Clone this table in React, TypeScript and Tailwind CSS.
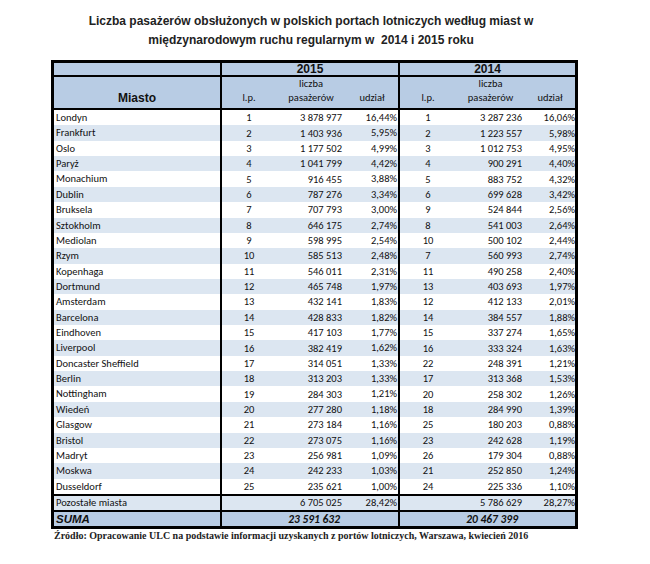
import React from 'react'

type Row = [string, string, string, string, string, string, string]

const ROWS: Row[] = [
  ['Londyn', '1', '3 878 977', '16,44%', '1', '3 287 236', '16,06%'],
  ['Frankfurt', '2', '1 403 936', '5,95%', '2', '1 223 557', '5,98%'],
  ['Oslo', '3', '1 177 502', '4,99%', '3', '1 012 753', '4,95%'],
  ['Paryż', '4', '1 041 799', '4,42%', '4', '900 291', '4,40%'],
  ['Monachium', '5', '916 455', '3,88%', '5', '883 752', '4,32%'],
  ['Dublin', '6', '787 276', '3,34%', '6', '699 628', '3,42%'],
  ['Bruksela', '7', '707 793', '3,00%', '9', '524 844', '2,56%'],
  ['Sztokholm', '8', '646 175', '2,74%', '8', '541 003', '2,64%'],
  ['Mediolan', '9', '598 995', '2,54%', '10', '500 102', '2,44%'],
  ['Rzym', '10', '585 513', '2,48%', '7', '560 993', '2,74%'],
  ['Kopenhaga', '11', '546 011', '2,31%', '11', '490 258', '2,40%'],
  ['Dortmund', '12', '465 748', '1,97%', '13', '403 693', '1,97%'],
  ['Amsterdam', '13', '432 141', '1,83%', '12', '412 133', '2,01%'],
  ['Barcelona', '14', '428 833', '1,82%', '14', '384 557', '1,88%'],
  ['Eindhoven', '15', '417 103', '1,77%', '15', '337 274', '1,65%'],
  ['Liverpool', '16', '382 419', '1,62%', '16', '333 324', '1,63%'],
  ['Doncaster Sheffield', '17', '314 051', '1,33%', '22', '248 391', '1,21%'],
  ['Berlin', '18', '313 203', '1,33%', '17', '313 368', '1,53%'],
  ['Nottingham', '19', '284 303', '1,21%', '20', '258 302', '1,26%'],
  ['Wiedeń', '20', '277 280', '1,18%', '18', '284 990', '1,39%'],
  ['Glasgow', '21', '273 184', '1,16%', '25', '180 203', '0,88%'],
  ['Bristol', '22', '273 075', '1,16%', '23', '242 628', '1,19%'],
  ['Madryt', '23', '256 981', '1,09%', '26', '179 304', '0,88%'],
  ['Moskwa', '24', '242 233', '1,03%', '21', '252 850', '1,24%'],
  ['Dusseldorf', '25', '235 621', '1,00%', '24', '225 336', '1,10%'],
]

const COLS = 'grid grid-cols-[168px_54px_70px_54px_56px_69px_50px]'
const BODY = "font-['Carlito','Calibri','Lato',sans-serif] text-[10.5px] text-[#111]"

export default function App() {
  return (
    <div className="w-[650px] h-[564px] bg-white text-black">
      {/* Title */}
      <div className="ml-[51px] w-[520px] pt-[12px] text-center font-['Liberation_Sans',Arial,sans-serif] font-bold text-[12px] leading-[19px] text-[#222]">
        <div>Liczba pasażerów obsłużonych w polskich portach lotniczych według miast w</div>
        <div className="whitespace-pre">międzynarodowym ruchu regularnym w  2014 i 2015 roku</div>
      </div>

      {/* Table */}
      <div className={`ml-[51px] mt-[10px] w-[527px] border-[3px] border-black ${BODY}`}>
        {/* year row */}
        <div className={`${COLS} h-[14px] bg-[#b8cce4] border-b-2 border-black font-['Liberation_Sans',Arial,sans-serif] font-bold text-[12px] leading-[12px]`}>
          <div className="border-r-2 border-black" />
          <div className="col-span-3 border-r-2 border-black text-center">2015</div>
          <div className="col-span-3 text-center">2014</div>
        </div>

        {/* column labels */}
        <div className={`${COLS} h-[33px] bg-[#b8cce4] border-b-2 border-black leading-[14px]`}>
          <div className="border-r-2 border-black flex items-end justify-center pb-[3px] font-['Liberation_Sans',Arial,sans-serif] font-bold text-[12px]">
            Miasto
          </div>
          <div className="flex items-end justify-center pb-[3px]">l.p.</div>
          <div className="flex flex-col items-center justify-end pb-[3px]">
            <span>liczba</span>
            <span>pasażerów</span>
          </div>
          <div className="border-r-2 border-black flex items-end justify-center pb-[3px]">udział</div>
          <div className="flex items-end justify-center pb-[3px]">l.p.</div>
          <div className="flex flex-col items-center justify-end pb-[3px]">
            <span>liczba</span>
            <span>pasażerów</span>
          </div>
          <div className="flex items-end justify-center pb-[3px]">udział</div>
        </div>

        {/* data */}
        {ROWS.map((r, i) => (
          <div key={r[0]} className={`${COLS} h-[15.36px] items-center leading-[15px] ${i % 2 ? 'bg-[#dce6f1]' : 'bg-white'}`}>
            <div className="h-full border-r-2 border-black pl-[2px]">{r[0]}</div>
            <div className="text-center">{r[1]}</div>
            <div className="text-right pr-[4px]">{r[2]}</div>
            <div className="h-full border-r-2 border-black text-right pr-[1px]">{r[3]}</div>
            <div className="text-center">{r[4]}</div>
            <div className="text-right pr-[3px]">{r[5]}</div>
            <div className="text-right">{r[6]}</div>
          </div>
        ))}

        {/* rest */}
        <div className={`${COLS} h-[18px] bg-[#dce6f1] border-y-2 border-black leading-[14px]`}>
          <div className="border-r-2 border-black pl-[2px]">Pozostałe miasta</div>
          <div />
          <div className="text-right pr-[4px]">6 705 025</div>
          <div className="border-r-2 border-black text-right pr-[1px]">28,42%</div>
          <div />
          <div className="text-right pr-[3px]">5 786 629</div>
          <div className="text-right">28,27%</div>
        </div>

        {/* total */}
        <div className={`${COLS} h-[14px] bg-[#b8cce4] leading-[14px] font-bold italic`}>
          <div className="border-r-2 border-black pl-[2px] font-['Liberation_Sans',Arial,sans-serif] text-[11.5px]">SUMA</div>
          <div />
          <div className="text-right pr-[6px] text-[11.5px]">23 591 632</div>
          <div className="border-r-2 border-black" />
          <div />
          <div className="text-right pr-[7px] text-[11.5px]">20 467 399</div>
          <div />
        </div>
      </div>

      {/* Source */}
      <div className="ml-[54px] mt-[1px] font-['Liberation_Serif','Times_New_Roman',serif] font-bold text-[10px] leading-[12px] text-[#222]">
        Źródło: Opracowanie ULC na podstawie informacji uzyskanych z portów lotniczych, Warszawa, kwiecień 2016
      </div>
    </div>
  )
}
